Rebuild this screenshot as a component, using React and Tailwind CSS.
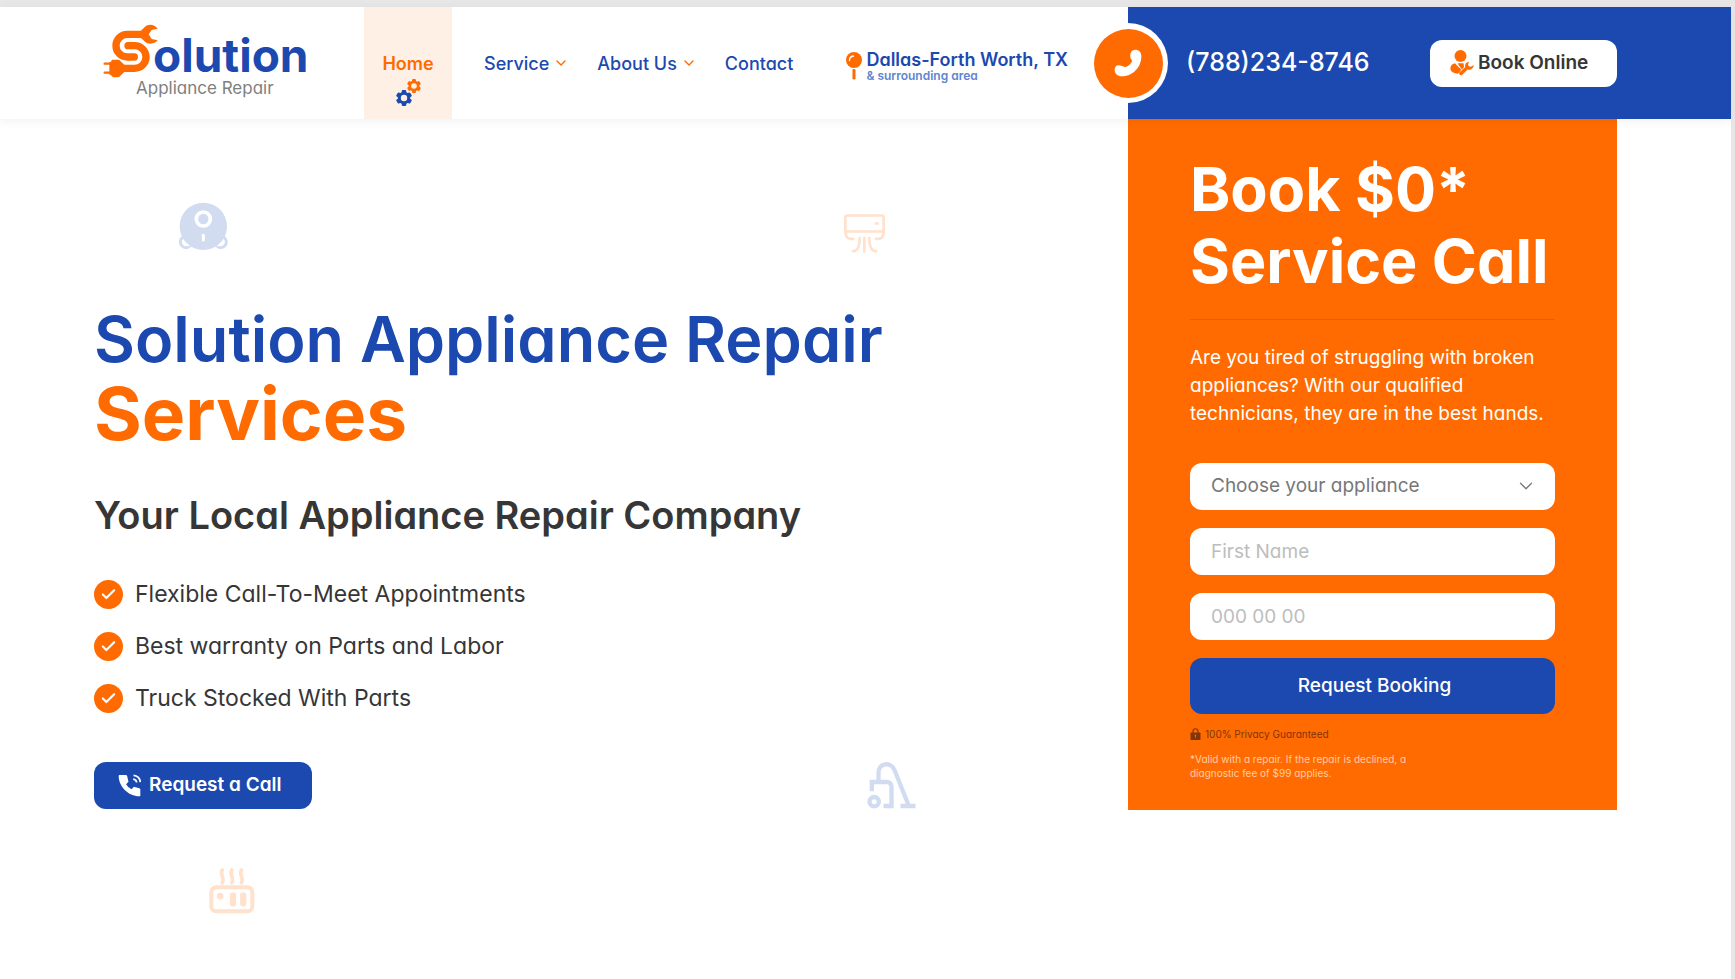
import { ChevronDown, Check } from "lucide-react";

function LogoMark() {
  return (
    <svg viewBox="70 72 168 162" className="h-[54px] w-14 shrink-0" fill="none" aria-hidden="true">
      <g stroke="#ff6b00" strokeWidth="22" strokeLinecap="round">
        <path d="M190 103H143a34 34 0 0 0 0 68H164" />
        <path d="M145 137H165a34 34 0 0 1 0 68H130" />
      </g>
      <path
        d="M234 86C224 71 203 70 193 83L183 93V113L193 122C203 134 224 134 234 121L216 117L207 103L216 90Z"
        fill="#ff6b00"
      />
      <path d="M89 186H93L97 179H118L134 194V216L119 230C112 232 104 232 98 230L93 224H89Z" fill="#ff6b00" />
      <path d="M75 191H92M75 218H92" stroke="#ff6b00" strokeWidth="7" strokeLinecap="round" />
    </svg>
  );
}

function Gear({ x, y, r, color }) {
  return (
    <g transform={`translate(${x} ${y})`} fill={color}>
      {[0, 60, 120].map((a) => (
        <rect key={a} x={-r * 0.28} y={-r} width={r * 0.56} height={r * 2} rx="1" transform={`rotate(${a})`} />
      ))}
      <circle r={r * 0.78} />
      <circle r={r * 0.4} fill="#fff0e6" />
    </g>
  );
}

function PinIcon() {
  return (
    <svg viewBox="0 0 16 28" className="h-7 w-4 shrink-0" fill="none" aria-hidden="true">
      <circle cx="8" cy="8" r="8" fill="#ff6b00" />
      <path d="M3.5 8.5A4.5 4.5 0 0 1 7.5 4" stroke="#fff" strokeWidth="1.3" strokeLinecap="round" />
      <rect x="6.5" y="17" width="3" height="10.5" rx="1.2" fill="#ff6b00" />
    </svg>
  );
}

function HandsetIcon() {
  return (
    <svg viewBox="882 144 86 86" className="size-7" aria-hidden="true">
      <path
        d="M948 146C958 146 966 153 966 166C966 201 938 228 905 228C893 228 884 220 884 208C884 198 890 192 899 194L911 198C916 200 919 200 923 197C930 193 935 188 938 180C931 174 931 163 933 156C936 149 941 146 948 146Z"
        fill="#fff"
      />
    </svg>
  );
}

function CallIcon() {
  return (
    <svg viewBox="113 614 68 68" className="size-[23px] shrink-0" fill="none" aria-hidden="true">
      <path
        d="M117 617H136Q139 617 140 620L144 637L137 644Q143 655 153 659L160 652L176 656Q179 657 179 660V678Q179 680 176 680C143 680 115 650 115 620Q115 617 117 617Z"
        fill="#fff"
      />
      <path d="M159 618A21 21 0 0 1 179 638M158 629A11 11 0 0 1 168 639" stroke="#fff" strokeWidth="5" />
    </svg>
  );
}

function TechnicianIcon() {
  return (
    <svg viewBox="0 0 24 26" className="h-[26px] w-6 shrink-0" aria-hidden="true">
      <circle cx="10.5" cy="6" r="6" fill="#ff6b00" />
      <path d="M5 13.2C2 13.6 0.4 16 0.4 18.6C0.4 22 4 23.6 8 23.8L11.5 19.5L8.5 17Z" fill="#ff6b00" />
      <path d="M7.5 13.2H13.5L14 17L12 19.5L10 17Z" fill="#ff6b00" />
      <path
        d="M18.8 11.8C16 12.2 14.6 14.6 15.3 17L9.4 22.4C8.4 23.6 10.2 26 12 25L17.6 19.6C20.4 20.4 23.6 18.6 23.7 15L20.4 17L18 15.2Z"
        fill="#ff6b00"
      />
    </svg>
  );
}

function LockIcon() {
  return (
    <svg viewBox="0 0 11 12" className="h-3 w-[11px] shrink-0" fill="none" aria-hidden="true">
      <path d="M3 5V3.2a2.5 2.5 0 0 1 5 0V5" stroke="#80360a" strokeWidth="1.1" />
      <rect x="0.5" y="4.5" width="10" height="7.5" rx="0.8" fill="#80360a" />
      <path d="M5.5 6.8V9.6M4.7 7.2H6.3" stroke="#ff6b00" strokeWidth="0.9" />
    </svg>
  );
}

function RobotArt() {
  return (
    <svg viewBox="57 67 147 147" className="absolute left-[179px] top-[83px] size-[49px]" aria-hidden="true">
      <circle cx="78" cy="187" r="17" fill="none" stroke="#d2dcf0" strokeWidth="9" />
      <circle cx="182" cy="187" r="17" fill="none" stroke="#d2dcf0" strokeWidth="9" />
      <circle cx="130" cy="140" r="71" fill="#d2dcf0" />
      <path d="M68 179C68 190 76 200 91 201ZM192 179C192 190 184 200 169 201Z" fill="#fff" />
      <circle cx="130" cy="118" r="21" fill="none" stroke="#fff" strokeWidth="11" />
      <path d="M130 167V181" stroke="#fff" strokeWidth="9" strokeLinecap="round" />
    </svg>
  );
}

function AirConditionerArt() {
  return (
    <svg
      viewBox="70 69 129 122"
      className="absolute left-[843px] top-[94px] h-[41px] w-[43px]"
      fill="none"
      stroke="#ffe1cc"
      strokeWidth="8"
      strokeLinecap="round"
      strokeLinejoin="round"
      aria-hidden="true"
    >
      <path d="M84 76H186Q192 76 192 82V124H77V82Q77 76 84 76Z" />
      <path d="M77 124Q78 146 92 146H101M192 124Q191 146 178 146H169M168 100H174" />
      <path d="M120 143C121 166 114 184 100 183M134 143V184M149 143C148 166 155 184 169 183" />
    </svg>
  );
}

function VacuumArt() {
  return (
    <svg
      viewBox="50 36 146 141"
      className="absolute left-[867px] top-[643px] h-[47px] w-[49px]"
      fill="none"
      stroke="#d2dcf0"
      strokeWidth="13"
      aria-hidden="true"
    >
      <circle cx="71" cy="155" r="14" />
      <path d="M64 124V96H108Q123 96 123 112V168H99" />
      <path d="M84 96V69C84 38 121 34 132 60L175 168M150 168H195" />
    </svg>
  );
}

function ToasterArt() {
  return (
    <svg viewBox="43 37 139 139" className="absolute left-[209px] top-[749px] size-[46px]" fill="none" stroke="#ffe1cc" aria-hidden="true">
      <rect x="50" y="95" width="124" height="73" rx="15" strokeWidth="12" />
      <circle cx="77" cy="122" r="10" fill="#ffe1cc" stroke="none" />
      <rect x="106" y="111" width="19" height="42" rx="7" fill="#ffe1cc" stroke="none" />
      <rect x="137" y="111" width="19" height="42" rx="7" fill="#ffe1cc" stroke="none" />
      <g strokeWidth="11" strokeLinecap="round">
        <path d="M83 43C74 58 92 66 83 82" />
        <path d="M112 43C103 58 121 66 112 82" />
        <path d="M141 43C132 58 150 66 141 82" />
      </g>
    </svg>
  );
}

const perks = ["Flexible Call-To-Meet Appointments", "Best warranty on Parts and Labor", "Truck Stocked With Parts"];

function Header() {
  return (
    <header className="relative z-10 flex h-28 bg-white shadow-[0_2px_10px_rgba(0,0,0,0.06)]">
      <div className="flex min-w-0 flex-1 pl-[103px]">
        <a href="#home" className="flex w-[261px] flex-col pt-[17px]">
          <span className="flex h-[54px] items-start">
            <LogoMark />
            <span className="-ml-1.5 pt-2 text-[46px] font-bold leading-[46px] text-[#1c49af]">olution</span>
          </span>
          <span className="pl-[33px] pt-px text-[17px] leading-[18px] text-[#808080]">Appliance Repair</span>
        </a>
        <nav className="flex text-[18px] font-medium text-[#1c49af]">
          <a href="#home" className="relative flex w-[88px] items-center justify-center bg-[#fff0e6] font-semibold text-[#ff6b00]">
            Home
            <svg viewBox="0 0 26 28" className="absolute left-8 top-[71px] h-7 w-[26px]" aria-hidden="true">
              <Gear x={18} y={8} r={7} color="#ff6b00" />
              <Gear x={8} y={20} r={8} color="#1c49af" />
            </svg>
          </a>
          <a href="#service" className="ml-8 flex items-center gap-1">
            Service
            <ChevronDown className="size-4 text-[#ff6b00]" strokeWidth={2} />
          </a>
          <a href="#about" className="ml-7 flex items-center gap-1">
            About Us
            <ChevronDown className="size-4 text-[#ff6b00]" strokeWidth={2} />
          </a>
          <a href="#contact" className="ml-7 flex items-center">
            Contact
          </a>
        </nav>
        <div className="ml-auto mr-[60px] flex items-center gap-1 pt-1.5">
          <PinIcon />
          <div className="font-semibold">
            <p className="text-[18px] leading-5 text-[#1c49af]">Dallas-Forth Worth, TX</p>
            <p className="text-[12px] leading-3 text-[#6084cf]">&amp; surrounding area</p>
          </div>
        </div>
      </div>
      <div className="relative flex w-[603px] items-center justify-between bg-[#1c49af] pl-[58px] pr-[114px]">
        <span className="absolute -left-10 top-4 flex size-20 items-center justify-center rounded-full bg-white">
          <span className="flex size-[69px] items-center justify-center rounded-full bg-[#ff6b00]">
            <HandsetIcon />
          </span>
        </span>
        <a href="tel:7882348746" className="text-[25px] font-medium text-white">
          (788)234-8746
        </a>
        <button className="flex h-[47px] w-[187px] items-center gap-1 rounded-xl bg-white pl-5 text-[19px] font-semibold text-[#363636]">
          <TechnicianIcon />
          Book Online
        </button>
      </div>
    </header>
  );
}

function BookingCard() {
  return (
    <form className="mr-[114px] w-[489px] shrink-0 bg-[#ff6b00] px-[62px] pb-[30px] pt-[34px]" onSubmit={(e) => e.preventDefault()}>
      <h2 className="whitespace-nowrap text-[61px] font-bold leading-[72px] text-white">
        Book $0*
        <br />
        Service Call
      </h2>
      <hr className="mt-[22px] border-[#e66000]" />
      <p className="mt-6 text-[19px] leading-7 text-white">
        Are you tired of struggling with broken appliances? With our qualified technicians, they are in the best hands.
      </p>
      <div className="mt-[35px] flex flex-col gap-[18px] text-[19px]">
        <div className="relative flex">
          <select aria-label="Appliance" className="h-[47px] w-full appearance-none rounded-xl bg-white pl-[21px] pr-12 text-[#777777]">
            <option>Choose your appliance</option>
          </select>
          <ChevronDown className="pointer-events-none absolute right-[18px] top-3 size-[22px] text-[#777777]" strokeWidth={1.4} />
        </div>
        <input aria-label="First name" placeholder="First Name" className="h-[47px] w-full rounded-xl bg-white px-[21px] placeholder:text-[#bdbdbd]" />
        <input
          aria-label="Phone number"
          type="tel"
          placeholder="000 00 00"
          className="h-[47px] w-full rounded-xl bg-white px-[21px] placeholder:text-[#bdbdbd]"
        />
        <button type="submit" className="h-14 rounded-xl bg-[#1c49af] pl-1 font-medium text-white">
          Request Booking
        </button>
      </div>
      <p className="mt-3 flex items-center gap-1 text-[10px] leading-4 text-[#80360a]">
        <LockIcon />
        100% Privacy Guaranteed
      </p>
      <p className="mt-2.5 w-[230px] text-[10px] leading-[14px] text-[#ffcba6]">
        *Valid with a repair. If the repair is declined, a diagnostic fee of $99 applies.
      </p>
    </form>
  );
}

export default function App() {
  return (
    <div className="min-h-screen border-r-4 border-t-[7px] border-[#e7e7e7] bg-white font-['Inter',sans-serif] [font-feature-settings:'cv11']">
      <Header />
      <main className="relative flex items-start justify-between">
        <RobotArt />
        <AirConditionerArt />
        <VacuumArt />
        <ToasterArt />
        <section className="relative min-w-0 pl-[94px] pt-[184px]">
          <h1 className="whitespace-nowrap font-semibold text-[#1c49af]">
            <span className="block text-[63px] leading-[72px]">Solution Appliance Repair</span>
            <span className="block text-[73px] font-bold leading-[78px] text-[#ff6b00]">Services</span>
          </h1>
          <h2 className="mt-[34px] text-[38px] font-semibold leading-[56px] text-[#363636]">Your Local Appliance Repair Company</h2>
          <ul className="mt-[37px] flex flex-col gap-[23px] text-[23px] leading-[29px] text-[#363636]">
            {perks.map((perk) => (
              <li key={perk} className="flex items-center gap-3">
                <span className="flex size-[29px] shrink-0 items-center justify-center rounded-full bg-[#ff6b00]">
                  <Check className="size-[17px] text-white" strokeWidth={3} />
                </span>
                {perk}
              </li>
            ))}
          </ul>
          <button className="mt-[49px] flex h-[47px] w-[218px] items-center gap-2 rounded-xl bg-[#1c49af] pl-6 text-[19px] font-semibold text-white">
            <CallIcon />
            Request a Call
          </button>
        </section>
        <BookingCard />
      </main>
    </div>
  );
}
